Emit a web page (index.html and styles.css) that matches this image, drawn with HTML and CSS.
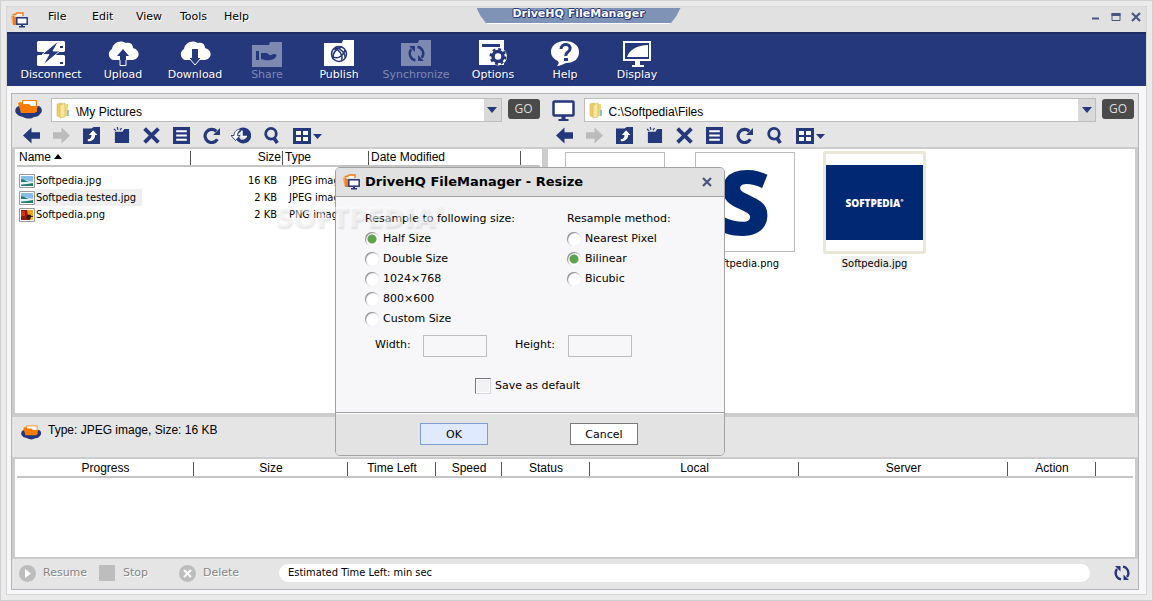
FILE: index.html
```html
<!DOCTYPE html>
<html lang="en">
<head>
<meta charset="utf-8">
<title>DriveHQ FileManager</title>
<link rel="stylesheet" href="styles.css">
</head>
<body>
<svg class="sprite" aria-hidden="true">
  <symbol id="i-app" viewBox="0 0 17 17">
    <path d="M1 3l4-1 1-1h6v3" fill="#fff" stroke="#f47b16" stroke-width="1.4"/>
    <path d="M0 4h3l1 1h8v8H2z" fill="#f47b16"/><path d="M1 2v9" stroke="#ffc58e"/>
    <rect x="5.8" y="5.800" width="10.400" height="6.400" fill="#fff" stroke="#26387c" stroke-width="1.500"/>
    <path d="M10 12h2v2h2v1.500H8V14h2z" fill="#26387c"/>
  </symbol>
  <symbol id="i-cloud" viewBox="0 0 28 20">
    <path d="M4 6C0 7-1 12 2 14c1 2 4 2 6 3 4 2 8 2 11 0 3 0 5-1 6-3 3-2 2-7-1-8z" fill="#26387c"/>
    <path d="M7.500.500h14v11h-14z" fill="#fff" stroke="#ff7a00"/>
    <path d="M3 3l3-1 2 2h6l2 2h7l-3 7H6z" fill="#ff7a00"/>
  </symbol>
  <symbol id="i-monitor" viewBox="0 0 24 21">
    <rect x="2" y="1.500" width="20" height="14" rx="1" fill="#fff" stroke="#26387c" stroke-width="2.500"/>
    <path d="M10 16h4v3h3v2H7v-2h3z" fill="#26387c"/>
  </symbol>
  <symbol id="i-folder" viewBox="0 0 14 17">
    <path d="M1 2l5-1v14l-5-1z" fill="#e9cf6c" stroke="#d5b54e" stroke-width=".6"/>
    <path d="M6 2h6v12H7z" fill="#f0d880"/><path d="M4 3l5-2v14l-5 1z" fill="#f7e69c" stroke="#d5b54e" stroke-width=".6"/>
    <path d="M12 8v6" stroke="#6fb4dd" stroke-width="1.500"/>
  </symbol>
  <symbol id="i-left" viewBox="0 0 16 16"><path d="M0 8l8-7.500V5h8v6H8v4.500z" fill="currentColor"/></symbol>
  <symbol id="i-right" viewBox="0 0 16 16"><path d="M16 8L8 .500V5H0v6h8v4.500z" fill="currentColor"/></symbol>
  <symbol id="i-up" viewBox="0 0 16 16"><path d="M0 1.500h8L10 0h6v16H0z" fill="currentColor"/><path d="M9.500 3l4 4.500h-2C11.500 11 9 13.500 4.500 13.500V11.500c2.500 0 3.500-1.500 3.500-4H5.500z" fill="#fff"/></symbol>
  <symbol id="i-new" viewBox="0 0 18 18"><path d="M2 5h8l2-3h5v15H2z" fill="currentColor"/><path d="M1 2l2 2M4.500 0l.700 3M9 1L7.500 3.500" stroke="currentColor" stroke-width="1.300"/></symbol>
  <symbol id="i-del" viewBox="0 0 16 16"><path d="M1.500 1.500l13 13M14.500 1.500l-13 13" stroke="currentColor" stroke-width="3.600"/></symbol>
  <symbol id="i-list" viewBox="0 0 16 16"><path d="M0 0h16v16H0z" fill="currentColor"/><path d="M3 4h10M3 8h10M3 12h10" stroke="#fff" stroke-width="1.800"/></symbol>
  <symbol id="i-refresh" viewBox="0 0 16 16"><path d="M12.500 4a6.200 6.200 0 1 0 1 7.500" fill="none" stroke="currentColor" stroke-width="3"/><path d="M16 1v6.500H9.500z" fill="currentColor"/></symbol>
  <symbol id="i-history" viewBox="0 0 20 16"><path d="M12 0a8 8 0 1 1-7 11.500L3.500 9H8c1 5 7 4 8-.5h-5V3L5 8C6 3 8 0 12 0z" fill="currentColor"/><path d="M0 8l4.500 5L9 8H6.500C6.500 5 8 3 10.500 2 6 1 3 4 3 8z" fill="#fff" stroke="currentColor" stroke-width=".9"/><path d="M11 3v6h5" fill="none" stroke="#fff" stroke-width="1.500"/></symbol>
  <symbol id="i-search" viewBox="0 0 16 16"><circle cx="7.500" cy="6.300" r="5" fill="none" stroke="currentColor" stroke-width="2.600"/><path d="M10 10l3.500 5" stroke="currentColor" stroke-width="3.400"/></symbol>
  <symbol id="i-view" viewBox="0 0 29 16"><path d="M0 0h18v16H0z" fill="currentColor"/><path d="M3 3h5v4H3zM10 3h5v4h-5zM3 9h5v4H3zM10 9h5v4h-5z" fill="#fff"/><path d="M20 6h9l-4.500 5z" fill="currentColor"/></symbol>
  <symbol id="i-sync" viewBox="0 0 18 18"><path d="M8 15.400A6.500 6.500 0 0 1 4 5M10 2.600A6.500 6.500 0 0 1 14 13" fill="none" stroke="currentColor" stroke-width="2.300"/><path d="M2 2h5.500v5.500zM16 16h-5.500v-5.500z" fill="currentColor"/></symbol>
  <symbol id="i-jpg" viewBox="0 0 16 14"><path d="M.5.5h15v13H.5z" fill="#fff" stroke="#999"/><path d="M2 2h12v10H2z" fill="#86bdeb"/><path d="M2 5l4 1 8 2v2H2z" fill="#e6f3f7"/><path d="M2 5c4 0 5 3 9 3H2zM2 11l12-2v3H2z" fill="#257b6e"/></symbol>
  <symbol id="i-png" viewBox="0 0 16 14"><path d="M.5.5h15v13H.5z" fill="#fff" stroke="#999"/><path d="M2 2h12v10H2z" fill="#8e1b12"/><path d="M2 3h4v5H2z" fill="#d9341a"/><path d="M8 2h6v6H9z" fill="#f0a51e"/><circle cx="10" cy="9" r="2.500" fill="#321b0b"/><path d="M12 9h2v3h-3z" fill="#efc12c"/></symbol>
  <symbol id="i-x" viewBox="0 0 10 10"><path d="M1 1l8 8M9 1L1 9" stroke="currentColor" stroke-width="2.200"/></symbol>
</svg>

<div class="window">
<div class="frame">
  <header class="menubar">
    <nav class="menus">
      <svg class="app-icon"><use href="#i-app"/></svg>
      <button class="menu">File</button><button class="menu">Edit</button><button class="menu">View</button><button class="menu">Tools</button><button class="menu">Help</button>
    </nav>
    <h1 class="title-tab">DriveHQ FileManager</h1>
    <div class="window-buttons">
      <button aria-label="Minimize"><svg viewBox="0 0 10 10"><path d="M1 5.500h7v2H1z" fill="currentColor"/></svg></button>
      <button aria-label="Maximize"><svg viewBox="0 0 10 10"><path d="M1 1.500h8v7H1z" fill="none" stroke="currentColor"/><path d="M.5 1h9v3h-9z" fill="currentColor"/></svg></button>
      <button aria-label="Close"><svg><use href="#i-x"/></svg></button>
    </div>
  </header>

  <div class="toolbar">
    <button class="tool"><svg viewBox="0 0 30 28"><path d="M2 1h26l1 1v9l-1 1H2l-1-1V2zM2 15h26l1 1v9l-1 1H2l-1-1v-9z" fill="#fff"/><path d="M21 2L6 14.500h7L7 25l17-14h-7l5-9z" fill="#26387c" stroke="#fff" stroke-width=".9"/><path d="M24 6h3v2h-3zM24 22h3v2h-3z" fill="#26387c"/></svg>Disconnect</button>
    <button class="tool"><svg viewBox="0 0 32 28"><path d="M6 20a6 6 0 0 1-1-11C6 3 13-1 19 3c5-1 7 2 7 5 8 2 7 11 0 12z" fill="#fff"/><path d="M16 9l6 7h-3v9h-6v-9h-3z" fill="#26387c"/><path d="M13 20v5.500h6V20" fill="none" stroke="#fff"/></svg>Upload</button>
    <button class="tool"><svg viewBox="0 0 32 28"><path d="M6 20a6 6 0 0 1-1-11C6 3 13-1 19 3c5-1 7 2 7 5 8 2 7 11 0 12z" fill="#fff"/><path d="M13 9h6v9h3l-6 7-6-7h3z" fill="#26387c"/><path d="M10 18l6 7 6-7" fill="none" stroke="#fff"/></svg>Download</button>
    <button class="tool" disabled><svg viewBox="0 0 30 28"><path d="M0 5h17l1-3h12v25H0z" fill="#7e89b1"/><path d="M4 11h3v9H4zM9 13h5c2 0 3 3 5 2 3-2 7-1 5 2-3 4-9 4-15 2z" fill="#26387c"/></svg>Share</button>
    <button class="tool"><svg viewBox="0 0 30 28"><path d="M0 3h18l1-3h11v26H0z" fill="#fff"/><g fill="none" stroke="#26387c" stroke-width="1.500"><circle cx="15" cy="14" r="7.500"/><path d="M9.500 9c5-1 10 6 8 12M8 16c4 4 11 1 13-6M11 8c4-1 11 5 10 10M9 19c-1-5 3-11 9-12"/></g></svg>Publish</button>
    <button class="tool wide" disabled><svg viewBox="0 0 30 28"><path d="M0 3h17l1-3h12v26H0z" fill="#7e89b1"/><use href="#i-sync" x="6" y="4" width="19" height="19" color="#26387c"/></svg>Synchronize</button>
    <button class="tool"><svg viewBox="0 0 30 28"><path d="M1 0h25v25H1z" fill="#fff"/><path d="M4 4h18v3H4z" fill="#26387c"/><circle cx="20" cy="16.500" r="9" fill="#fff"/><circle cx="20" cy="16.500" r="5" fill="none" stroke="#26387c" stroke-width="3.500"/><circle cx="20" cy="16.500" r="7" fill="none" stroke="#26387c" stroke-width="3" stroke-dasharray="2.750 2.750"/></svg>Options</button>
    <button class="tool"><svg viewBox="0 0 30 28"><path d="M15 1c8 0 14 4 14 11s-5 11-13 11c-3 1-6 3-9 3 2-2 2-3 1-5C-4 16 0 1 15 1z" fill="#fff"/><path d="M11 9c0-6 10-6 9 0 0 3-5 3-4 7" fill="none" stroke="#26387c" stroke-width="3"/><path d="M14 18h4v3h-4z" fill="#26387c"/></svg>Help</button>
    <button class="tool"><svg viewBox="0 0 30 28"><path d="M1 1h28v20H18v4h4v2H10v-2h3v-4H1z" fill="#fff"/><path d="M3 3h24v16H3z" fill="#26387c"/><path d="M5 17C7 10 15 5 26 5v12z" fill="#fff"/></svg>Display</button>
  </div>

  <main class="content">
  <div class="panel">
    <div class="panes">
      <section class="pane pane-remote">
        <div class="address">
          <svg class="place cloud"><use href="#i-cloud"/></svg>
          <div class="combo"><svg class="folder"><use href="#i-folder"/></svg><select aria-label="Remote folder"><option>\My Pictures</option></select><span class="arrow"></span></div>
          <button class="go">GO</button>
        </div>
        <div class="actions">
          <button aria-label="Back"><svg><use href="#i-left"/></svg></button>
          <button aria-label="Forward" disabled><svg><use href="#i-right"/></svg></button>
          <button aria-label="Up"><svg><use href="#i-up"/></svg></button>
          <button aria-label="New folder"><svg><use href="#i-new"/></svg></button>
          <button aria-label="Delete"><svg><use href="#i-del"/></svg></button>
          <button aria-label="Properties"><svg><use href="#i-list"/></svg></button>
          <button aria-label="Refresh"><svg><use href="#i-refresh"/></svg></button>
          <button aria-label="History"><svg class="history"><use href="#i-history"/></svg></button>
          <button aria-label="Search"><svg><use href="#i-search"/></svg></button>
          <button class="view" aria-label="View"><svg><use href="#i-view"/></svg></button>
        </div>
        <div class="list">
          <table class="files">
            <colgroup><col class="f-name"><col class="f-size"><col class="f-type"><col class="f-date"><col></colgroup>
            <thead><tr><th>Name <span class="sort"></span></th><th class="num">Size</th><th>Type</th><th>Date Modified</th><th></th></tr></thead>
            <tbody>
              <tr><td><span class="file"><svg><use href="#i-jpg"/></svg><span>Softpedia.jpg</span></span></td><td class="num">16 KB</td><td>JPEG image</td><td></td><td></td></tr>
              <tr><td><span class="file chosen"><svg><use href="#i-jpg"/></svg><span>Softpedia tested.jpg</span></span></td><td class="num">2 KB</td><td>JPEG image</td><td></td><td></td></tr>
              <tr><td><span class="file"><svg><use href="#i-png"/></svg><span>Softpedia.png</span></span></td><td class="num">2 KB</td><td>PNG image</td><td></td><td></td></tr>
            </tbody>
          </table>
        </div>
      </section>

      <section class="pane pane-local">
        <div class="address">
          <svg class="place screen"><use href="#i-monitor"/></svg>
          <div class="combo"><svg class="folder"><use href="#i-folder"/></svg><select aria-label="Local folder"><option>C:\Softpedia\Files</option></select><span class="arrow"></span></div>
          <button class="go">GO</button>
        </div>
        <div class="actions">
          <button aria-label="Back"><svg><use href="#i-left"/></svg></button>
          <button aria-label="Forward" disabled><svg><use href="#i-right"/></svg></button>
          <button aria-label="Up"><svg><use href="#i-up"/></svg></button>
          <button aria-label="New folder"><svg><use href="#i-new"/></svg></button>
          <button aria-label="Delete"><svg><use href="#i-del"/></svg></button>
          <button aria-label="Properties"><svg><use href="#i-list"/></svg></button>
          <button aria-label="Refresh"><svg><use href="#i-refresh"/></svg></button>
          <button aria-label="Search"><svg><use href="#i-search"/></svg></button>
          <button class="view" aria-label="View"><svg><use href="#i-view"/></svg></button>
        </div>
        <div class="list thumbs">
          <figure class="thumb"><div class="preview"></div></figure>
          <figure class="thumb"><div class="preview letter">S</div><figcaption>Softpedia.png</figcaption></figure>
          <figure class="thumb selected"><div class="preview"><div class="banner">SOFTPEDIA<sup>®</sup></div></div><figcaption>Softpedia.jpg</figcaption></figure>
        </div>
      </section>
    </div>

    <div class="info"><svg><use href="#i-cloud"/></svg><span>Type: JPEG image, Size: 16 KB</span></div>

    <div class="queue">
      <table class="transfers">
        <colgroup><col class="q-progress"><col class="q-size"><col class="q-time"><col class="q-speed"><col class="q-time"><col class="q-path"><col class="q-path"><col class="q-time"><col></colgroup>
        <thead><tr><th>Progress</th><th>Size</th><th>Time Left</th><th>Speed</th><th>Status</th><th>Local</th><th>Server</th><th>Action</th><th></th></tr></thead>
      </table>
    </div>

    <footer class="statusbar">
      <button class="job" disabled><svg viewBox="0 0 17 17"><circle cx="8.500" cy="8.500" r="8.500" fill="#bdbdbd"/><path d="M6 4l6 4.500L6 13z" fill="#fff"/></svg>Resume</button>
      <button class="job" disabled><svg viewBox="0 0 17 17"><rect width="16" height="16" rx="1" fill="#bdbdbd"/></svg>Stop</button>
      <button class="job" disabled><svg viewBox="0 0 17 17"><circle cx="8.500" cy="8.500" r="8.500" fill="#bdbdbd"/><path d="M5 5l7 7M12 5l-7 7" stroke="#fff" stroke-width="2"/></svg>Delete</button>
      <div class="estimate">Estimated Time Left: min sec</div>
      <button class="reload" aria-label="Refresh queue"><svg><use href="#i-sync"/></svg></button>
    </footer>
  </div>
  </main>
</div>

<form class="dialog" role="dialog" aria-labelledby="dialog-title">
  <header class="dialog-head">
    <svg class="app-icon"><use href="#i-app"/></svg>
    <h2 id="dialog-title">DriveHQ FileManager - Resize</h2>
    <button type="button" class="dialog-close" aria-label="Close"><svg><use href="#i-x"/></svg></button>
  </header>
  <div class="dialog-body">
    <div class="groups">
      <fieldset>
        <legend>Resample to following size:</legend>
        <label><input type="radio" name="size" checked>Half Size</label>
        <label><input type="radio" name="size">Double Size</label>
        <label><input type="radio" name="size">1024×768</label>
        <label><input type="radio" name="size">800×600</label>
        <label><input type="radio" name="size">Custom Size</label>
      </fieldset>
      <fieldset>
        <legend>Resample method:</legend>
        <label><input type="radio" name="method">Nearest Pixel</label>
        <label><input type="radio" name="method" checked>Bilinear</label>
        <label><input type="radio" name="method">Bicubic</label>
      </fieldset>
    </div>
    <div class="dimensions">
      <label for="width">Width:</label><input id="width" type="text" disabled>
      <label for="height">Height:</label><input id="height" type="text" disabled>
    </div>
    <label class="save"><input type="checkbox">Save as default</label>
  </div>
  <footer class="dialog-foot">
    <button type="button" class="primary">OK</button>
    <button type="button">Cancel</button>
  </footer>
</form>
<div class="watermark">SOFTPEDIA<sup>®</sup></div>
</div>
</body>
</html>
```
FILE: styles.css
```css
* { box-sizing: border-box; }
body {
  margin: 0;
  color: #000;
  font: 11px/16px "DejaVu Sans", sans-serif;
}
button, input, select { font: inherit; color: inherit; margin: 0; padding: 0; }
button { border: 0; background: none; }
svg { display: block; flex: none; }
.sprite { position: absolute; width: 0; height: 0; }

.window {
  position: relative;
  display: flex;
  min-height: 100vh;
  padding: 5px;
  border: 1px solid #d0d0d0;
  background: #ebebeb;
}
.frame {
  flex: 1;
  min-width: 0;
  display: flex;
  flex-direction: column;
  border: 1px solid #d6d6d8;
  background: #f7f7f9;
}

/* Menu bar */
.menubar {
  display: grid;
  grid-template-columns: 1fr auto 1fr;
  height: 25px;
  padding-left: 4px;
  background: #e1e1e1;
}
.menus { display: flex; align-items: flex-start; }
.app-icon { width: 17px; height: 17px; }
.menus .app-icon { margin-right: 20px; margin-top: 5px; }
.menu { min-width: 44px; height: 20px; text-align: left; text-shadow: 1px 1px #fff; }
.title-tab {
  width: 204px;
  height: 17px;
  margin: 0;
  border-bottom: 1px solid #fff;
  background: #7f93b7;
  clip-path: polygon(0 1px, 100% 1px, 98% 9px, 95% 100%, 5% 100%, 2% 9px);
  color: #fff;
  font-size: 11px;
  line-height: 13px;
  text-align: center;
  text-shadow: 1px 0 #26387c, -1px 0 #26387c, 0 1px #26387c, 0 -1px #26387c, 1px 1px #26387c;
}
.window-buttons { display: flex; justify-content: flex-end; gap: 10px; padding: 4px 5px 0 0; color: #4a5680; }
.window-buttons button { width: 10px; height: 12px; }
.window-buttons svg { width: 10px; height: 10px; }

/* Main toolbar */
.toolbar {
  display: flex;
  height: 54px;
  padding: 6px 0 0 8px;
  border-top: 2px solid #1d2c63;
  background: #26387c;
}
.tool {
  display: flex;
  flex-direction: column;
  align-items: center;
  width: 72px;
  color: #fff;
  line-height: 14px;
  white-space: nowrap;
  text-shadow: 1px 1px #16245a;
}
.tool.wide { width: 82px; }
.tool:disabled { color: #7e89b1; text-shadow: none; }
.tool svg { width: 32px; height: 28px; }

/* Panel */
.content { flex: 1; display: flex; padding: 7px 7px 4px 4px; }
.panel {
  flex: 1;
  min-width: 0;
  display: flex;
  flex-direction: column;
  border: 1px solid #b4b4b8;
  background: #e5e5e5;
}
.panes { flex: 1; display: flex; }
.pane { min-width: 0; display: flex; flex-direction: column; padding-top: 4px; }
.pane-remote { flex: 533; }
.pane-local { flex: 594; }

.address { display: flex; align-items: center; height: 24px; padding: 0 5px 0 3px; gap: 6px; }
.place.cloud { width: 28px; height: 20px; margin-right: 2px; }
.pane-local .address { padding-left: 6px; padding-right: 4px; }
.place.screen { width: 25px; height: 21px; margin-right: 2px; }
.combo {
  flex: 1;
  min-width: 0;
  display: flex;
  align-items: stretch;
  height: 24px;
  border: 1px solid #bdbdbd;
  background: #fff;
}
.folder { width: 14px; height: 17px; margin: 3px 6px 0 4px; }
.combo select {
  flex: 1;
  min-width: 0;
  appearance: none;
  border: 0;
  background: #fff;
  padding-top: 3px;
  font: 12px/18px "Liberation Sans", Arial, sans-serif;
}
.arrow { display: grid; place-items: center; width: 17px; background: #d9d9d9; }
.arrow::before {
  content: "";
  border: 5px solid transparent;
  border-top: 6px solid #26387c;
  border-bottom: 0;
}
.go {
  width: 32px;
  height: 20px;
  margin-bottom: 2px;
  border-radius: 3px;
  background: #4a4a4a;
  color: #ddd;
  font: 12px/18px "Open Sans", sans-serif;
}

.actions { display: flex; height: 25px; padding: 2px 0 0 4px; color: #26387c; }
.pane-local .actions { padding-left: 5px; }
.actions button { display: grid; place-items: center; width: 30px; height: 23px; }
.actions button:disabled { color: #bbb; }
.actions .view { width: 42px; }
.actions svg { width: 17px; height: 17px; }
.actions .history { width: 20px; }
.actions .view svg { width: 29px; height: 16px; }

.list {
  flex: 1;
  border: solid #ccc;
  border-width: 2px 3px 4px;
  background: #fff;
}

/* Tables */
table { width: 100%; table-layout: fixed; border-collapse: separate; border-spacing: 0; }
th {
  height: 18px;
  padding: 1px 2px 0;
  border-bottom: 2px solid #c4c4c4;
  overflow: hidden;
  font: 12px/15px "Liberation Sans", Arial, sans-serif;
  text-align: left;
  white-space: nowrap;
}
th:not(:last-child) { background: linear-gradient(#555, #555) right bottom / 1px 14px no-repeat; }
td { height: 17px; padding: 0 6px; line-height: 17px; overflow: visible; white-space: nowrap; }
.list td, figcaption, .estimate { font-family: "DejaVu Sans Condensed", "DejaVu Sans", sans-serif; font-stretch: condensed; }
th.num, td.num { text-align: right; }
.files { padding: 0 2px; }
.files tbody::before { content: ""; display: block; height: 5px; }
.files td:first-child { padding-left: 2px; }
.f-name { width: 174px; }
.f-size { width: 92px; }
.f-type { width: 86px; }
.f-date { width: 152px; }
.sort { display: inline-block; border: 4px solid transparent; border-bottom: 5px solid #000; border-top: 0; vertical-align: 2px; }
.file { display: inline-flex; align-items: center; height: 17px; vertical-align: top; }
.file svg { width: 16px; height: 14px; }
.file span { padding: 0 6px 0 1px; }
.chosen span { background: #efefef; }

/* Thumbnails */
.thumbs { display: flex; gap: 28px; padding: 2px 0 0 16px; }
.thumb { display: flex; flex-direction: column; align-items: center; width: 102px; margin: 0; padding-top: 1px; }
.preview { width: 100px; height: 100px; border: 1px solid #bbb; background: #fff; }
.letter { color: #002873; font: 800 90px/94px "Open Sans", sans-serif; text-align: center; }
.thumb.selected { padding-top: 0; }
.selected .preview { display: flex; align-items: center; width: 103px; height: 103px; border: 3px solid #ece8d8; border-radius: 2px; }
.banner {
  display: flex;
  justify-content: center;
  align-items: center;
  width: 100%;
  height: 75px;
  background: #002873;
  color: #fff;
  font: 800 10px/12px "Open Sans", sans-serif;
}
.banner sup { font-size: 4px; line-height: 4px; margin-bottom: 4px; }
figcaption { margin-top: 4px; padding: 0 1px; line-height: 15px; }
.selected figcaption { margin-top: 2px; background: #efefef; }

/* Details and queue */
.info {
  display: flex;
  align-items: flex-start;
  gap: 6px;
  height: 40px;
  padding: 5px 9px;
  font: 12px/16px "Liberation Sans", Arial, sans-serif;
}
.info svg { width: 21px; height: 20px; margin-top: 1px; }
.queue { min-height: 102px; padding: 0 2px; border: solid #ccc; border-width: 2px 3px; background: #fff; }
.transfers th { height: 19px; padding-top: 2px; text-align: center; }
.q-progress { width: 177px; }
.q-size { width: 154px; }
.q-time { width: 88px; }
.q-speed { width: 66px; }
.q-path { width: 209px; }

.statusbar { display: flex; align-items: center; height: 30px; padding: 0 7px 2px 7px; }
.job { display: flex; align-items: center; gap: 7px; min-width: 80px; color: #858585; text-shadow: 1px 1px #fff; }
.job svg { width: 17px; height: 17px; }
.job:nth-child(3) { min-width: 100px; }
.estimate { flex: 1; height: 18px; padding: 0 9px; border-radius: 9px; background: #fff; line-height: 18px; }
.reload { margin-left: 23px; color: #26387c; }
.reload svg { width: 18px; height: 18px; }

/* Resize dialog */
.dialog {
  position: absolute;
  top: 166px;
  left: 334px;
  width: 390px;
  border: 1px solid #a2a2a2;
  border-radius: 5px;
  background: #f7f7f9;
  overflow: hidden;
}
.dialog-head {
  display: flex;
  align-items: center;
  gap: 5px;
  height: 29px;
  padding: 0 12px 0 7px;
  border-bottom: 1px solid #a2a2a2;
  background: #e1e1e1;
}
.dialog-head h2 { flex: 1; margin: 0; font-size: 13px; line-height: 16px; }
.dialog-close { color: #4a5680; }
.dialog-close svg { width: 10px; height: 10px; }
.dialog-body { padding: 12px 0 18px 29px; }
.groups { display: grid; grid-template-columns: 202px 1fr; }
fieldset { min-width: 0; margin: 0; padding: 0; border: 0; }
legend { padding: 0; line-height: 19px; }
fieldset label { display: flex; align-items: center; gap: 4px; height: 20px; padding-top: 1px; }
input[type="radio"] {
  appearance: none;
  width: 14px;
  height: 14px;
  border-radius: 50%;
  background: #fff;
  box-shadow: inset 1px 1px 1px #88888e, 0 0 1px #e2e2ec;
}
input[type="radio"]:checked { background: radial-gradient(circle, #5fa34c 0 4px, #fff 5px); }
.dimensions { display: flex; align-items: center; margin-top: 7px; padding-left: 10px; }
.dimensions label { width: 48px; padding-bottom: 3px; }
.dimensions input { width: 64px; height: 22px; border: 1px solid #bdbdbd; background: #f7f7f9; }
.dimensions input + label { width: 53px; margin-left: 28px; }
.save { display: flex; align-items: center; gap: 4px; margin: 21px 0 0 110px; }
.save input {
  appearance: none;
  width: 16px;
  height: 16px;
  border: 1px solid #d5d5e2;
  border-top-color: #77777f;
  border-left-color: #77777f;
  background: #f2f2f4;
  box-shadow: inset 0 0 0 1px #fff;
}
.dialog-foot {
  display: flex;
  gap: 82px;
  height: 43px;
  padding: 10px 84px;
  border-top: 1px solid #a2a2a2;
  box-shadow: inset 0 1px #fff;
  background: #e3e3e3;
}
.dialog-foot button { width: 68px; height: 22px; padding-top: 1px; border: 1px solid #7a7a7a; background: #fff; }
.dialog-foot .primary { border-color: #7a9fd0; background: #dfeaff; }

.watermark {
  position: absolute;
  top: 199px;
  left: 275px;
  color: rgba(255, 255, 255, .5);
  font: 800 29px/32px "Open Sans", sans-serif;
  text-shadow: 1px 2px 2px rgba(0, 0, 0, .1);
  pointer-events: none;
}
.watermark sup { font-size: 10px; line-height: 10px; vertical-align: 14px; }
```
